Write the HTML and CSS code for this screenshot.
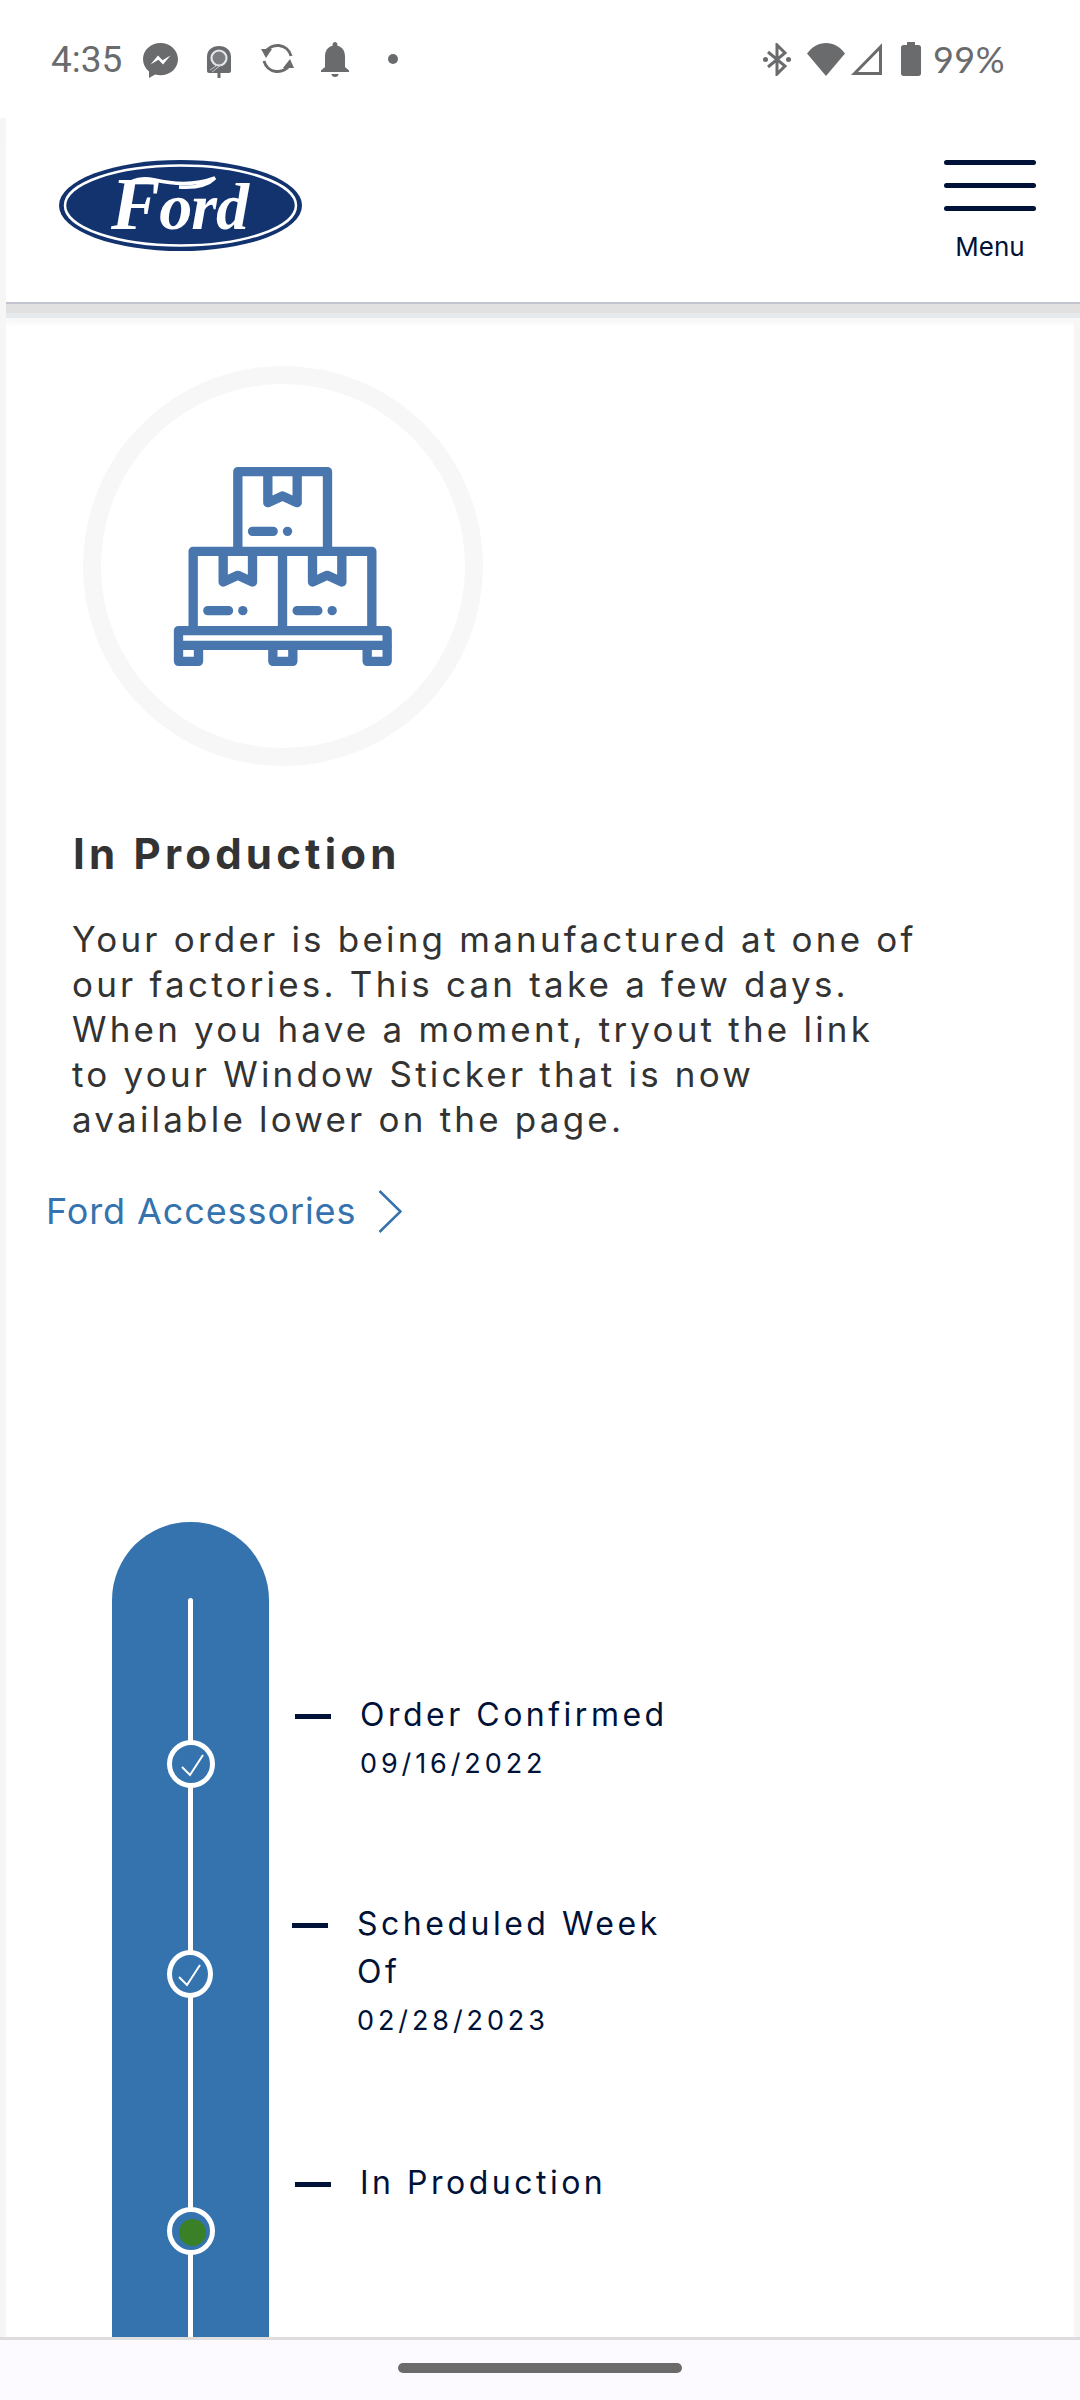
FILE: index.html
```html
<!DOCTYPE html>
<html lang="en">
<head>
    <meta charset="UTF-8">
    <title>Order status</title>
    <meta name="viewport" content="width=device-width, initial-scale=1.0">
    <link rel="stylesheet" href="styles.css">
</head>
<body>
    <div class="status-bar">
        <div class="status-left">
            <span class="clock">4:35</span>
            <svg class="ic-messenger" viewBox="0 0 35 35"><path d="M17.5 0C7.8 0 0 7.2 0 16.2c0 4.9 2.3 9.2 6 12.2V35l6.2-3.4c1.7.5 3.5.7 5.3.7 9.7 0 17.5-7.2 17.5-16.1S27.2 0 17.5 0z" fill="#6a6b6d"/><path d="M7.5 21.5l7.5-9 4.5 4.8 8-4.8-7.5 9-4.5-4.8z" fill="#fff"/></svg>
            <svg class="ic-ring" viewBox="0 0 24 32"><path d="M0 11C0 4 5 0 12 0s12 4 12 11v14c0 1-1 2-2 2H13.500v5h-3v-5H2c-1 0-2-1-2-2z" fill="#6a6b6d"/><circle cx="12" cy="12" r="7.500" fill="#7b7d80" stroke="#e2e6ea" stroke-width="2.200"/><path d="M3 24l9-6 M5 26l9-7" stroke="#c4c8cc" stroke-width="1" fill="none"/></svg>
            <svg class="ic-sync" viewBox="0 0 33 33"><path d="M4 11A14 14 0 0 1 30 14" fill="none" stroke="#6a6b6d" stroke-width="3"/><path d="M29 22A14 14 0 0 1 3 19" fill="none" stroke="#6a6b6d" stroke-width="3"/><path d="M0 7l11 0-6 9z" fill="#6a6b6d"/><path d="M33 26l-11 0 7-9z" fill="#6a6b6d"/></svg>
            <svg class="ic-bell" viewBox="0 0 28 35"><path d="M14 0c1.400 0 2.400 1 2.400 2.500v1.300C21.500 5 24 9.300 24 14.500V25l4 3.500V30H0v-1.500L4 25V14.500C4 9.300 6.500 5 11.600 3.800V2.500C11.600 1 12.600 0 14 0z" fill="#6a6b6d"/><path d="M10.500 32h7c0 1.700-1.500 3-3.500 3s-3.500-1.300-3.500-3z" fill="#6a6b6d"/></svg>
            <span class="status-dot"></span>
        </div>
        <div class="status-right">
            <svg class="ic-bt" viewBox="0 0 28 33"><path d="M5 9l17 14-8 8V2l8 8-17 14" fill="none" stroke="#6a6b6d" stroke-width="3"/><circle cx="2.500" cy="16.500" r="2.500" fill="#6a6b6d"/><circle cx="25.500" cy="16.500" r="2.500" fill="#6a6b6d"/></svg>
            <svg class="ic-wifi" viewBox="0 0 38 33"><path d="M19 33L0 10.500C5 4 11.500 0 19 0s14 4 19 10.500z" fill="#6a6b6d"/></svg>
            <svg class="ic-signal" viewBox="0 0 32 32"><path d="M4.500 30.500L30.500 4v26.500z" fill="none" stroke="#6a6b6d" stroke-width="3"/></svg>
            <svg class="ic-battery" viewBox="0 0 20 34"><path d="M6 0h8v3h3.500c1.400 0 2.500 1 2.500 2.500V31.500c0 1.400-1.100 2.500-2.500 2.500h-15C1.100 34 0 32.900 0 31.500V5.500C0 4 1.100 3 2.500 3H6z" fill="#6a6b6d"/></svg>
            <span class="battery-pct">99%</span>
        </div>
    </div>

    <header class="site-header">
        <svg class="ford-logo" viewBox="0 0 243 91">
            <ellipse cx="121.500" cy="45.500" rx="121.500" ry="45.500" fill="#13336f"/>
            <ellipse cx="121.500" cy="45.500" rx="115.500" ry="40" fill="none" stroke="#fff" stroke-width="2.500"/>
            <path d="M66 28c6-9 16-11 30-8 22 5 44 4 60-2-8 8-22 10-36 9" fill="none" stroke="#fff" stroke-width="3.500"/>
            <text class="ford-word" x="52" y="69"><tspan class="ford-cap">F</tspan>ord</text>
        </svg>
        <button class="menu-btn">
            <span class="menu-bars"><i></i><i></i><i></i></span>
            <span class="menu-label">Menu</span>
        </button>
    </header>

    <main class="page">
        <div class="status-ring">
            <svg class="pallet-icon" viewBox="340 378 656 597">
                <g fill="none" stroke="#4a76ae" stroke-width="28" stroke-linejoin="round">
                    <path d="M534 631V392H803V631"/>
                    <path d="M624 392V485L668 465 712 485V392" />
                    <path d="M400 869V631H936V869M668 631V869"/>
                    <path d="M490 631V723L534 703 578 723V631"/>
                    <path d="M758 631V723L802 703 846 723V631"/>
                    <rect x="356" y="869" width="626" height="44"/>
                    <path d="M356 913V961H416V913M639 913V961H699V913M922 913V961H982V913"/>
                    <path d="M578 571H640M444 809H506M712 809H774" stroke-linecap="round"/>
                </g>
                <g fill="#4a76ae">
                    <circle cx="683" cy="571" r="14"/>
                    <circle cx="549" cy="809" r="14"/>
                    <circle cx="817" cy="809" r="14"/>
                </g>
            </svg>
        </div>

        <h1 class="status-title">In Production</h1>
        <p class="status-text">Your order is being manufactured at one of<br>our factories. This can take a few days.<br>When you have a moment, tryout the link<br>to your Window Sticker that is now<br>available lower on the page.</p>
        <a class="acc-link" href="#">Ford Accessories
            <svg class="chevron" viewBox="0 0 24 43"><path d="M1.500 1L22.500 21.500 1.500 42" fill="none" stroke="#3473ae" stroke-width="2.500"/></svg>
        </a>

        <div class="timeline">
            <div class="track">
                <span class="node node-first"><svg viewBox="0 0 48 48"><path d="M15 27l8 8 13-20" fill="none" stroke="#fff" stroke-width="2"/></svg></span>
                <span class="node node-second"><svg viewBox="0 0 48 48"><path d="M13 27l8 8 13-20" fill="none" stroke="#fff" stroke-width="2"/></svg></span>
                <span class="node node-current"><span class="green-dot"></span></span>
            </div>
            <div class="steps">
                <div class="step step-first">
                    <span class="dash"></span>
                    <div class="step-text">
                        <div class="step-name">Order Confirmed</div>
                        <div class="step-date">09/16/2022</div>
                    </div>
                </div>
                <div class="step step-second">
                    <span class="dash"></span>
                    <div class="step-text">
                        <div class="step-name">Scheduled Week Of</div>
                        <div class="step-date">02/28/2023</div>
                    </div>
                </div>
                <div class="step step-third">
                    <span class="dash"></span>
                    <div class="step-text">
                        <div class="step-name">In Production</div>
                    </div>
                </div>
            </div>
        </div>
    </main>

    <div class="nav-bar"><span class="home-pill"></span></div>
</body>
</html>
```
FILE: styles.css
```css
html, body {
    margin: 0;
    padding: 0;
}
body {
    width: 1080px;
    height: 2400px;
    overflow: hidden;
    display: flex;
    flex-direction: column;
    background: #f6f6f6;
    font-family: Inter, "Noto Sans", Arial, sans-serif;
}

/* status bar */
.status-bar {
    height: 118px;
    flex: none;
    display: flex;
    justify-content: space-between;
    align-items: center;
    padding: 0 75px 0 51px;
    box-sizing: border-box;
    background: #fff;
    color: #6a6b6d;
}
.status-left, .status-right {
    display: flex;
    align-items: center;
}
.clock {
    font-family: Roboto, sans-serif;
    font-size: 37px;
    width: 71px;
    margin-top: 1px;
}
.ic-messenger { width: 35px; height: 35px; margin: 3px 0 0 21px; }
.ic-ring { width: 24px; height: 32px; margin: 6px 0 0 29px; }
.ic-sync { width: 33px; height: 33px; margin: -2px 0 0 30px; }
.ic-bell { width: 28px; height: 35px; margin: 1px 0 0 27px; }
.status-dot {
    width: 10px;
    height: 10px;
    border-radius: 50%;
    background: #6a6b6d;
    margin-left: 39px;
}
.ic-bt { width: 28px; height: 33px; }
.ic-wifi { width: 38px; height: 33px; margin-left: 16px; }
.ic-signal { width: 32px; height: 32px; margin-left: 5px; }
.ic-battery { width: 20px; height: 34px; margin-left: 19px; }
.battery-pct {
    font-family: Lato, sans-serif;
    font-size: 36px;
    margin-left: 12px;
    letter-spacing: 0.5px;
}

/* header */
.site-header {
    height: 184px;
    flex: none;
    margin-left: 6px;
    padding: 42px 44px 0 53px;
    box-sizing: border-box;
    display: flex;
    justify-content: space-between;
    align-items: flex-start;
    background: #fff;
    box-shadow: 0 2px 0 #c2c5cd, 0 11px 0 #e1e1e1, 0 16px 0 #e6eaec, 0 22px 5px #f7f7f7;
    position: relative;
    z-index: 2;
}
.ford-logo {
    width: 243px;
    height: 91px;
}
.ford-word {
    font-family: "Liberation Serif", serif;
    font-style: italic;
    font-weight: bold;
    font-size: 66px;
    letter-spacing: -1px;
    fill: #fff;
}
.ford-cap {
    font-size: 74px;
}
.menu-btn {
    border: none;
    background: none;
    padding: 0;
    width: 92px;
    display: flex;
    flex-direction: column;
    align-items: center;
    font-family: inherit;
}
.menu-bars {
    width: 92px;
    display: flex;
    flex-direction: column;
    gap: 18px;
}
.menu-bars i {
    display: block;
    height: 5px;
    border-radius: 3px;
    background: #001238;
}
.menu-label {
    margin-top: 18px;
    font-size: 26px;
    line-height: 36px;
    color: #001238;
}

/* main */
.page {
    flex: 1;
    min-height: 0;
    overflow: hidden;
    margin: 0 6px;
    background: #fff;
}
.status-ring {
    width: 400px;
    height: 400px;
    margin: 64px 0 0 77px;
    box-sizing: border-box;
    border: 18px solid #f7f7f7;
    border-radius: 50%;
    display: flex;
    align-items: center;
    justify-content: center;
}
.pallet-icon {
    width: 219px;
    height: 199px;
    margin-right: 2px;
}
.status-title {
    margin: 62px 0 0 67px;
    font-size: 42px;
    line-height: 52px;
    font-weight: 700;
    letter-spacing: 4.2px;
    color: #333;
}
.status-text {
    margin: 37px 0 0 66px;
    font-size: 35px;
    line-height: 45px;
    letter-spacing: 3.2px;
    color: #333;
}
.acc-link {
    display: flex;
    align-items: center;
    gap: 22px;
    margin: 47px 0 0 40px;
    font-size: 36px;
    line-height: 44px;
    letter-spacing: 0.9px;
    color: #3473ae;
    text-decoration: none;
}
.chevron {
    width: 24px;
    height: 43px;
}

/* timeline */
.timeline {
    display: flex;
    margin-top: 289px;
}
.track {
    width: 157px;
    height: 815px;
    margin-left: 106px;
    border-radius: 78px 78px 0 0;
    background: #3473ae;
    position: relative;
    display: flex;
    flex-direction: column;
    align-items: center;
    padding-top: 218px;
    box-sizing: border-box;
    flex: none;
}
.track::before {
    content: "";
    position: absolute;
    top: 76px;
    bottom: 0;
    left: 76px;
    width: 5px;
    border-radius: 3px 3px 0 0;
    background: #fff;
}
.node {
    width: 48px;
    height: 48px;
    box-sizing: border-box;
    border: 5px solid #fff;
    border-radius: 50%;
    background: #3473ae;
    position: relative;
    display: flex;
    align-items: center;
    justify-content: center;
    flex: none;
}
.node svg {
    width: 48px;
    height: 48px;
    flex: none;
}
.node-first { margin-left: 1px; }
.node-second { margin-top: 162px; width: 46px; margin-right: 1px; }
.node-current { margin-top: 209px; margin-left: 1px; }
.green-dot {
    width: 27px;
    height: 27px;
    border-radius: 50%;
    background: #3a8026;
    margin-left: 3px;
    margin-top: 2px;
}
.steps {
    margin-left: 26px;
    padding-top: 169px;
}
.step {
    display: flex;
    align-items: flex-start;
}
.step-second { margin: 112px 0 0 -3px; }
.step-third { margin-top: 114px; }
.dash {
    width: 36px;
    height: 5px;
    margin-top: 23px;
    background: #001238;
    flex: none;
}
.step-text {
    width: 320px;
    margin-left: 29px;
    color: #001238;
}
.step-name {
    font-size: 32px;
    line-height: 48px;
    letter-spacing: 3.5px;
}
.step-date {
    font-size: 27px;
    line-height: 49px;
    letter-spacing: 3.9px;
}

/* android nav */
.nav-bar {
    height: 63px;
    flex: none;
    box-sizing: border-box;
    border-top: 3px solid #ddd;
    background: #fcfaff;
    display: flex;
    justify-content: center;
    padding-top: 23px;
}
.home-pill {
    width: 284px;
    height: 10px;
    border-radius: 5px;
    background: #6b6b6b;
}
```
